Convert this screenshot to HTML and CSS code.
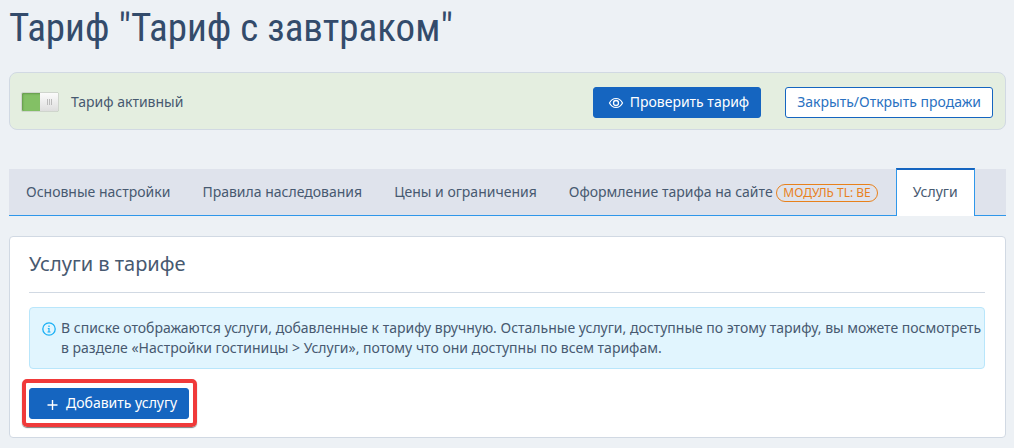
FILE: index.html
```html
<!DOCTYPE html>
<html lang="ru">
<head>
	<meta charset="UTF-8">
	<title>Тариф с завтраком</title>
	<link rel="stylesheet" href="styles.css">
</head>
<body>

	<h1>Тариф "Тариф с завтраком"</h1>

	<div class="status">
		<input type="checkbox" class="switch" id="active" checked>
		<label for="active">Тариф активный</label>
		<div class="actions">
			<button class="btn" type="button">
				<svg width="16" height="16" viewBox="0 0 16 16" fill="none" stroke="currentColor">
					<path d="M1.500 9C3 6 5.300 4.500 8 4.500s5 1.500 6.500 4.500C13 12 10.700 13.500 8 13.500s-5-1.500-6.500-4.500z" stroke-width="1.200"/>
					<circle cx="8" cy="9" r="2.500" stroke-width="1.300"/>
				</svg>
				Проверить тариф
			</button>
			<button class="btn btn-light" type="button">Закрыть/Открыть продажи</button>
		</div>
	</div>

	<nav class="tabs">
		<a href="#">Основные настройки</a>
		<a href="#">Правила наследования</a>
		<a href="#">Цены и ограничения</a>
		<a href="#">Оформление тарифа на сайте <span class="badge">МОДУЛЬ TL: BE</span></a>
		<a href="#" class="active">Услуги</a>
	</nav>

	<section class="card">
		<h2>Услуги в тарифе</h2>

		<div class="info">
			<svg width="14" height="14" viewBox="0 0 14 14" fill="none" stroke="#1ab0f5">
				<circle cx="7" cy="7" r="6.200" stroke-width="1.300"/>
				<path d="M7 3.500v1.500M5.800 6.500H7v3.500M5.500 10h3" stroke-width="1.200"/>
			</svg>
			<p>В списке отображаются услуги, добавленные к тарифу вручную. Остальные услуги, доступные по этому тарифу, вы можете посмотреть в разделе «Настройки гостиницы &gt; Услуги», потому что они доступны по всем тарифам.</p>
		</div>

		<div class="highlight">
			<button class="btn" type="button">
				<svg width="16" height="16" viewBox="0 0 16 16" fill="none" stroke="currentColor">
					<path d="M8.500 5v10M3.500 10h10" stroke-width="1.400"/>
				</svg>
				Добавить услугу
			</button>
		</div>
	</section>

</body>
</html>
```
FILE: styles.css
```css
* {
	box-sizing: border-box;
}

body {
	margin: 0;
	padding: 0 8px 10px 9px;
	background: #edf1f5;
	color: #475970;
	font-family: "Noto Sans", "Open Sans", sans-serif;
	font-size: 14px;
	line-height: 20px;
}

h1 {
	margin: 0;
	padding: 4px 0 20px;
	color: #334b6b;
	font-family: "Roboto Condensed", Roboto, sans-serif;
	font-size: 39px;
	font-weight: 400;
	line-height: 48px;
}

.status {
	display: flex;
	align-items: center;
	padding: 14px 12px 11px 11px;
	border: 1px solid #d1d9e3;
	border-radius: 8px;
	background: #e4eee0;
}

.status label {
	padding-bottom: 2px;
}

.switch {
	appearance: none;
	position: relative;
	width: 38px;
	height: 20px;
	margin: 0 12px 2px 0;
	border: 1px solid #cfd5cd;
	border-radius: 2px;
	background: #ddd;
	cursor: pointer;
}

.switch:checked {
	background: #83c065;
	box-shadow: inset 1px 1px 2px #64994b;
}

/* ручка переключателя */
.switch::before {
	content: "";
	position: absolute;
	top: 0;
	left: 0;
	width: 18px;
	height: 18px;
	background: linear-gradient(#fbfbfb, #dedede);
}

.switch:checked::before {
	left: 18px;
}

.switch::after {
	content: "";
	position: absolute;
	top: 6px;
	left: 6px;
	width: 5px;
	height: 6px;
	background: repeating-linear-gradient(90deg, #bbb 0, #bbb 1px, transparent 1px, transparent 2px);
}

.switch:checked::after {
	left: 25px;
}

.actions {
	display: flex;
	gap: 24px;
	margin-left: auto;
}

.btn {
	display: inline-flex;
	align-items: center;
	gap: 6px;
	height: 31px;
	padding: 0 11px 2px 14px;
	border: 1px solid #1565c0;
	border-radius: 3px;
	background: #1565c0;
	color: #fff;
	font: inherit;
	cursor: pointer;
}

.btn-light {
	padding: 0 11px 2px;
	background: #fff;
	color: #2a71c1;
}

.tabs {
	display: flex;
	margin: 38px 0 20px;
	border-bottom: 1px solid #2f97ea;
	background: linear-gradient(#edf1f5 1px, #dfe3ec 1px);
}

.tabs a {
	margin-bottom: -1px;
	padding: 13px 14px 14px 16px;
	border: 1px solid transparent;
	border-bottom: 0;
	color: #475970;
	text-decoration: none;
	white-space: nowrap;
}

.tabs .active {
	padding: 12px 16px 14px;
	border-color: #2f97ea;
	border-top: 2px solid #1565c0;
	background: #fff;
}

.badge {
	display: inline-block;
	margin-right: 3px;
	padding: 0 6px;
	border: 1px solid #e8811c;
	border-radius: 9px;
	color: #e8811c;
	font-size: 12px;
	line-height: 16px;
}

.card {
	padding: 13px 20px 18px 19px;
	border: 1px solid #d1d9e3;
	border-radius: 4px;
	background: #fff;
}

h2 {
	margin: 0 0 14px;
	padding-bottom: 15px;
	border-bottom: 1px solid #d1d9e3;
	font-size: 20px;
	font-weight: 400;
	line-height: 27px;
}

.info {
	display: flex;
	gap: 5px;
	margin-bottom: 19px;
	padding: 10px 0 10px 12px;
	border: 1px solid #b9e6fb;
	border-radius: 4px;
	background: #e1f5fe;
}

.info svg {
	flex: none;
	margin-top: 4px;
}

.info p {
	margin: 0;
}

.highlight {
	position: relative;
	display: inline-flex;
}

/* красная рамка вокруг кнопки */
.highlight::after {
	content: "";
	position: absolute;
	inset: -9px -8px -8px -7px;
	border: 4px solid #f03a3a;
	border-radius: 5px;
	box-shadow: 0 1px 1px rgba(0, 0, 0, 0.5);
	pointer-events: none;
}
```
